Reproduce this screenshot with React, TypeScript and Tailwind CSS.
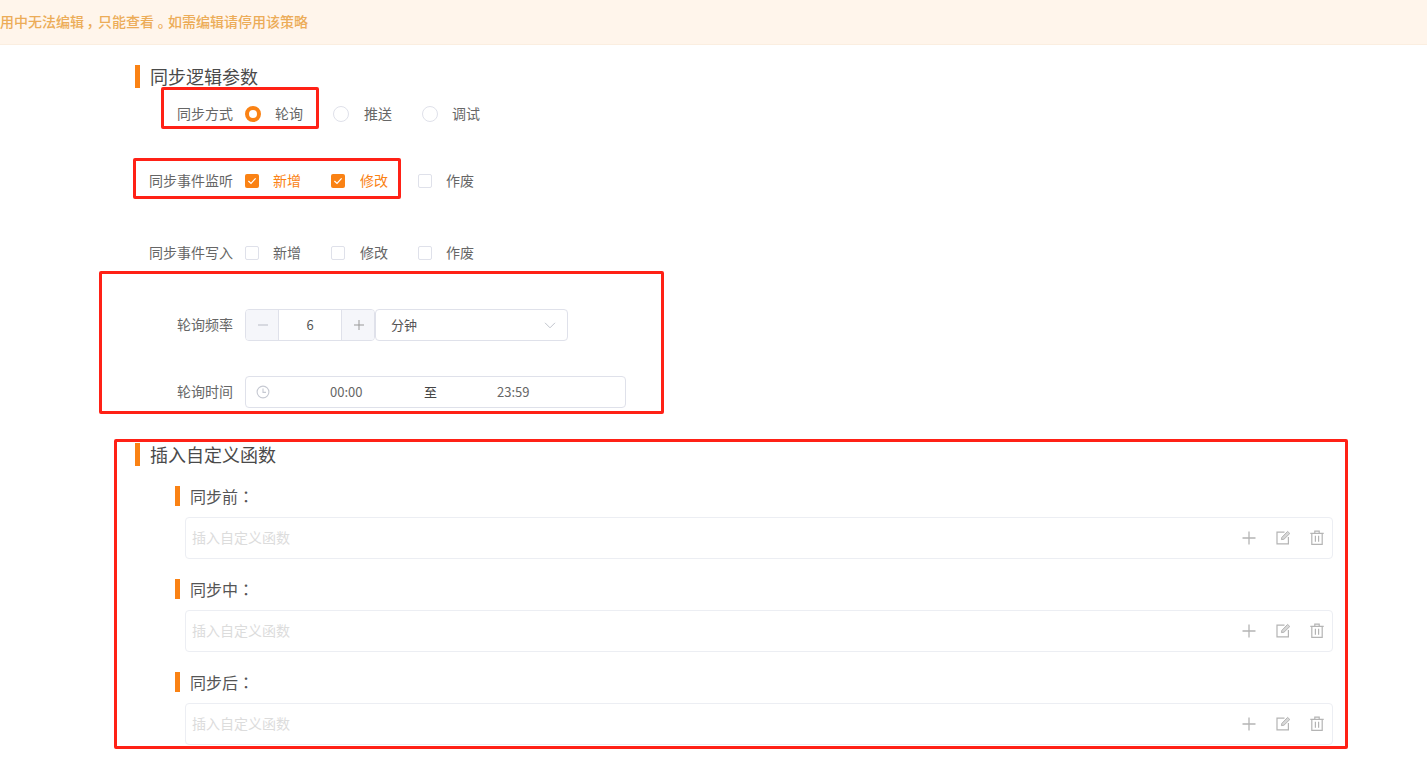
import React from "react";

function Heading({ children, className = "" }: { children: React.ReactNode; className?: string }) {
  return (
    <div className={`flex h-[23px] items-center ${className}`}>
      <span className="h-[23px] w-[5px] bg-[#fa8214]" />
      <span className="ml-[10px] text-[18px] leading-[23px] text-[#4a4a4a]">{children}</span>
    </div>
  );
}

function Row({ label, className, children }: { label: string; className: string; children: React.ReactNode }) {
  return (
    <div className={`flex h-8 items-center ${className}`}>
      <span className="w-[98px] shrink-0 pb-[2px] text-right text-[14px] whitespace-nowrap text-[#666]">{label}</span>
      <div className="ml-3 flex items-center">{children}</div>
    </div>
  );
}

function Radio({ label, checked, width, gap = "ml-[14px]" }: { label: string; checked?: boolean; width: string; gap?: string }) {
  return (
    <div className={`flex items-center ${width}`}>
      <span
        className={
          checked
            ? "box-border h-4 w-4 rounded-full border-[4px] border-[#fa8214] bg-white"
            : "box-border h-4 w-4 rounded-full border border-[#dfe1ea] bg-white"
        }
      />
      <span className={`${gap} pb-[2px] text-[14px] text-[#666]`}>{label}</span>
    </div>
  );
}

function Check({ label, checked, width, gap = "ml-[14px]" }: { label: string; checked?: boolean; width: string; gap?: string }) {
  return (
    <div className={`flex items-center ${width}`}>
      {checked ? (
        <span className="flex h-[14px] w-[14px] items-center justify-center rounded-[2px] bg-[#fa8214]">
          <svg width="12" height="12" viewBox="0 0 12 12" fill="none" stroke="#fff" strokeWidth="1.2">
            <path d="M2.4 6 5 8.5 9.6 3.4" />
          </svg>
        </span>
      ) : (
        <span className="box-border h-[14px] w-[14px] rounded-[2px] border border-[#dfe1ea] bg-white" />
      )}
      <span className={`${gap} pb-[2px] text-[14px] ${checked ? "text-[#fa8214]" : "text-[#666]"}`}>{label}</span>
    </div>
  );
}

function FnIcons() {
  return (
    <div className="flex items-center text-[#b4b4b4]">
      <svg width="14" height="14" viewBox="0 0 14 14" fill="none" stroke="currentColor" strokeWidth="1.3">
        <path d="M7 .5v13M.5 7h13" />
      </svg>
      <svg className="mb-[2px] ml-[20px]" width="15" height="15" viewBox="0 0 15 15" fill="none" stroke="currentColor" strokeWidth="1.2">
        <path d="M8.5 2.1H1v11.8h11.4V7" />
        <path d="M5.4 9.6 5.9 7.3 11.6 1.4 13.8 3.5 8 9.2z" fill="#d8d8d8" strokeWidth="1" />
      </svg>
      <svg className="mb-[1px] ml-[19px]" width="14" height="15" viewBox="0 0 14 15" fill="none" stroke="currentColor" strokeWidth="1.2">
        <path d="M.3 3.4h13.4M4.8 3.4V1.2h4.4v2.2M1.8 3.4v11h10.4v-11M5.4 5.8v6M8.6 5.8v6" />
      </svg>
    </div>
  );
}

function FnBlock({ title, className = "" }: { title: string; className?: string }) {
  return (
    <div className={className}>
      <div className="ml-10 flex h-5 items-center">
        <span className="h-5 w-[5px] bg-[#fa8214]" />
        <span className="ml-[10px] pb-[1px] text-[16px] leading-5 text-[#555]">
          {title}
          <span className="font-['Noto_Sans_CJK_TC']">：</span>
        </span>
      </div>
      <div className="mt-[11px] ml-[50px] box-border flex h-[42px] w-[1148px] items-center justify-between rounded-[4px] border border-[#eceef3] bg-white pr-[8px] pl-[6px]">
        <span className="pb-[2px] text-[14px] text-[#dcdcdc]">插入自定义函数</span>
        <FnIcons />
      </div>
    </div>
  );
}

function Mark({ className }: { className: string }) {
  return <div className={`pointer-events-none absolute box-border rounded-[2px] border-[3px] border-[#ff2116] ${className}`} />;
}

export default function App() {
  return (
    <div className="relative h-[784px] w-[1427px] overflow-hidden bg-white font-['Noto_Sans_CJK_SC','Liberation_Sans',sans-serif]">
      <div className="box-border flex h-[45px] items-center border-b border-[#fbeee0] bg-[#fff5eb]">
        <span className="pb-[2px] text-[14px] font-medium whitespace-nowrap text-[#ecac58]">
          用中无法编辑<span className="inline-block w-[14px] text-center [font-feature-settings:'palt']">，</span>只能查看<span className="inline-block w-[14px] text-center [font-feature-settings:'palt']">。</span>如需编辑请停用该策略
        </span>
      </div>

      <div className="pl-[135px]">
        <Heading className="mt-5">同步逻辑参数</Heading>

        <Row label="同步方式" className="mt-[10px]">
          <Radio label="轮询" checked width="w-[88px]" />
          <Radio label="推送" width="w-[89px]" gap="ml-[15px]" />
          <Radio label="调试" width="w-[70px]" />
        </Row>

        <Row label="同步事件监听" className="mt-[35px]">
          <Check label="新增" checked width="w-[86px]" />
          <Check label="修改" checked width="w-[87px]" gap="ml-[15px]" />
          <Check label="作废" width="w-[70px]" />
        </Row>

        <Row label="同步事件写入" className="mt-10">
          <Check label="新增" width="w-[86px]" />
          <Check label="修改" width="w-[87px]" gap="ml-[15px]" />
          <Check label="作废" width="w-[70px]" />
        </Row>

        <Row label="轮询频率" className="mt-10">
          <div className="box-border flex h-8 w-[130px] overflow-hidden rounded-[4px] border border-[#dfe1ea]">
            <div className="flex w-[33px] items-center justify-center border-r border-[#dfe1ea] bg-[#f5f6fa] pl-[1px]">
              <svg width="12" height="12" viewBox="0 0 12 12" stroke="#b9bcc6" strokeWidth="1"><path d="M1 6h10" /></svg>
            </div>
            <div className="flex flex-1 items-center justify-center text-[13px] text-[#555]">6</div>
            <div className="flex w-[33px] items-center justify-center border-l border-[#dfe1ea] bg-[#f5f6fa] pl-[1px]">
              <svg width="12" height="12" viewBox="0 0 12 12" stroke="#999" strokeWidth="1"><path d="M1 6h10M6 1v10" /></svg>
            </div>
          </div>
          <div className="box-border flex h-8 w-[193px] items-center justify-between rounded-[4px] border border-[#dfe1ea] pr-[11px] pl-[15px]">
            <span className="pb-[1px] text-[13px] text-[#555]">分钟</span>
            <svg width="12" height="7" viewBox="0 0 12 7" fill="none" stroke="#c0c4cc" strokeWidth="1"><path d="M1 .8 6 5.8l5-5" /></svg>
          </div>
        </Row>

        <Row label="轮询时间" className="mt-[35px]">
          <div className="box-border flex h-8 w-[381px] items-center rounded-[4px] border border-[#dfe1ea] text-[13px] text-[#666]">
            <svg className="ml-[10px]" width="14" height="14" viewBox="0 0 14 14" fill="none" stroke="#c6c9d2" strokeWidth="1.1">
              <circle cx="7" cy="7" r="5.9" />
              <path d="M7 3.4V7.4H10" />
            </svg>
            <span className="ml-[60px] w-[94px]">00:00</span>
            <span className="w-[73px] text-[#444]">至</span>
            <span>23:59</span>
          </div>
        </Row>

        <Heading className="mt-[35px]">插入自定义函数</Heading>
        <FnBlock title="同步前" className="mt-5" />
        <FnBlock title="同步中" className="mt-5" />
        <FnBlock title="同步后" className="mt-5" />
      </div>

      <Mark className="top-[87px] left-[161px] h-[42px] w-[158px]" />
      <Mark className="top-[158px] left-[133px] h-[41px] w-[268px]" />
      <Mark className="top-[271px] left-[99px] h-[143px] w-[565px]" />
      <Mark className="top-[439px] left-[114px] h-[310px] w-[1234px]" />
    </div>
  );
}
